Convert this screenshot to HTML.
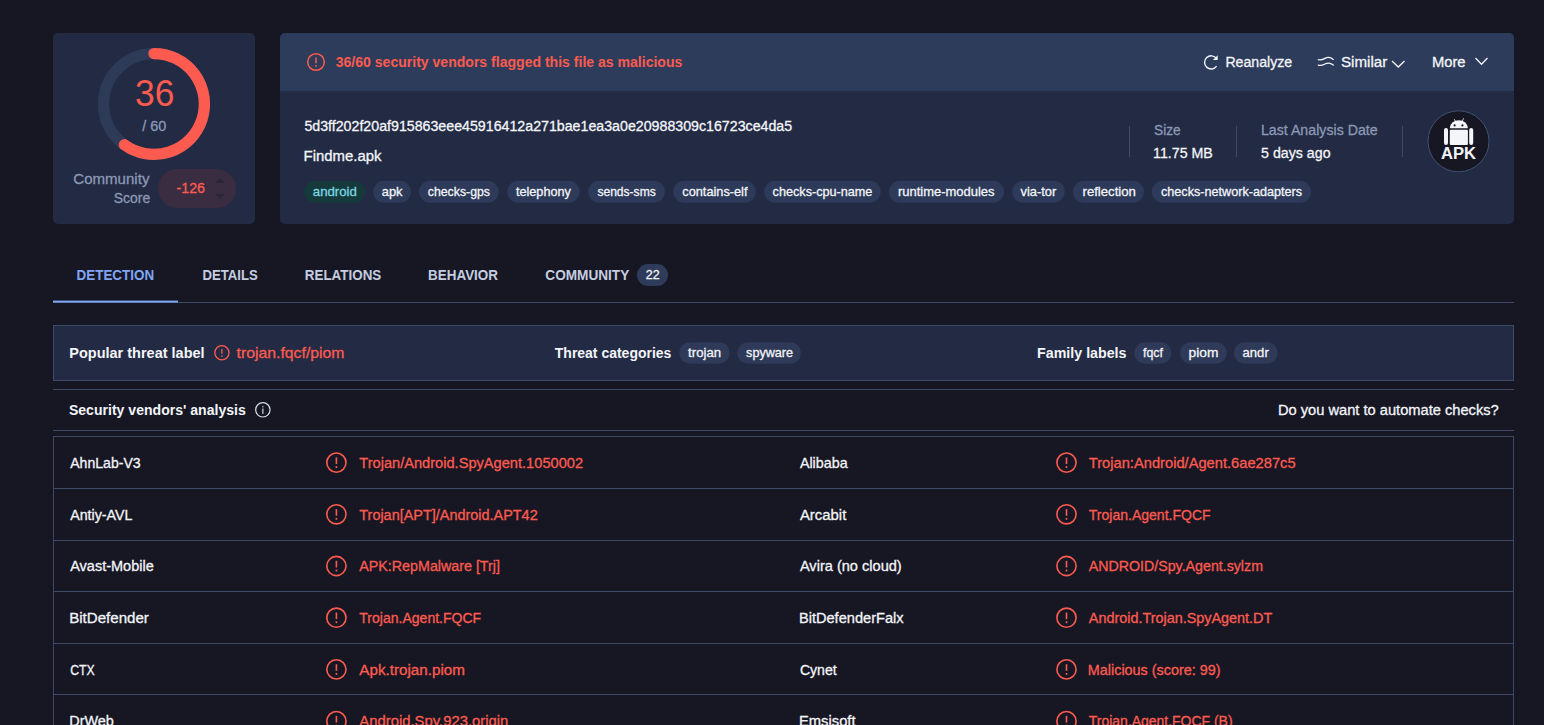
<!DOCTYPE html>
<html><head><meta charset="utf-8"><style>
html,body{margin:0;padding:0;}
body{width:1544px;height:725px;overflow:hidden;background:#171724;position:relative;font-family:"Liberation Sans",sans-serif;}
.abs{position:absolute;}
svg{position:absolute;left:0;top:0;}
svg text{font-family:"Liberation Sans",sans-serif;white-space:pre;stroke-width:0.3px;paint-order:stroke;}
</style></head><body>
<div class="abs" style="left:53px;top:33px;width:202px;height:191px;background:#232a43;border-radius:5px;"></div>
<div class="abs" style="left:280px;top:33px;width:1234px;height:191px;background:#232a43;border-radius:5px;overflow:hidden;">
  <div style="height:58px;background:#2e3c5b;"></div>
</div>
<div class="abs" style="left:53px;top:325px;width:1459px;height:54px;background:#232a43;border:1px solid #3c4967;"></div>
<div class="abs" style="left:53px;top:389px;width:1461px;height:1px;background:#3c4967;"></div>
<div class="abs" style="left:53px;top:430px;width:1461px;height:1px;background:#3c4967;"></div>
<div class="abs" style="left:53px;top:436px;width:1459px;height:400px;border:1px solid #3c4967;"></div>
<div class="abs" style="left:54px;top:488px;width:1459px;height:1px;background:#3c4967;"></div><div class="abs" style="left:54px;top:540px;width:1459px;height:1px;background:#3c4967;"></div><div class="abs" style="left:54px;top:591px;width:1459px;height:1px;background:#3c4967;"></div><div class="abs" style="left:54px;top:643px;width:1459px;height:1px;background:#3c4967;"></div><div class="abs" style="left:54px;top:694px;width:1459px;height:1px;background:#3c4967;"></div>
<svg width="1544" height="725" viewBox="0 0 1544 725">
<rect x="304.1" y="180.8" width="60.9" height="22" rx="11" fill="#163a3c"/><rect x="373.1" y="180.8" width="37.9" height="22" rx="11" fill="#2d3a5a"/><rect x="419" y="180.8" width="79.6" height="22" rx="11" fill="#2d3a5a"/><rect x="507.2" y="180.8" width="72.4" height="22" rx="11" fill="#2d3a5a"/><rect x="588.2" y="180.8" width="76.7" height="22" rx="11" fill="#2d3a5a"/><rect x="673.3" y="180.8" width="82.5" height="22" rx="11" fill="#2d3a5a"/><rect x="764.2" y="180.8" width="116.5" height="22" rx="11" fill="#2d3a5a"/><rect x="889" y="180.8" width="115.0" height="22" rx="11" fill="#2d3a5a"/><rect x="1012.2" y="180.8" width="52.5" height="22" rx="11" fill="#2d3a5a"/><rect x="1073" y="180.8" width="71.0" height="22" rx="11" fill="#2d3a5a"/><rect x="1151.9" y="180.8" width="159.1" height="22" rx="11" fill="#2d3a5a"/>
<circle cx="154" cy="104" r="50.4" fill="none" stroke="#2e3b58" stroke-width="11.3"/><path d="M 154 53.6 A 50.4 50.4 0 1 1 124.38 144.77" fill="none" stroke="#fd5b4f" stroke-width="11.3" stroke-linecap="round"/><rect x="158" y="169" width="78" height="39" rx="19.5" fill="#3a2d42"/><path d="M215 183 L220 178 L225 183 Z" fill="#2a2638"/><path d="M215 194 L220 199 L225 194 Z" fill="#2a2638"/><circle cx="316" cy="62" r="8.3" fill="none" stroke="#fd5b4f" stroke-width="1.5"/><rect x="315.25" y="57.52" width="1.5" height="5.73" fill="#fd5b4f"/><rect x="315.25" y="65.00" width="1.5" height="1.80" fill="#fd5b4f"/><path d="M 1216.5 58.5 A 6.6 6.6 0 1 0 1216.6 66.2" fill="none" stroke="#f3f5f9" stroke-width="1.4"/><path d="M 1212.9 59.9 L 1217.7 59.9 L 1217.7 55.2 Z" fill="#f3f5f9"/><path d="M1318.3 59.6 C 1321 60.4, 1322.8 59.6, 1325 58.4 C 1327.5 57, 1330.5 57.2, 1333.3 59.4" fill="none" stroke="#f3f5f9" stroke-width="1.3" stroke-linecap="round"/><path d="M1318.3 65.2 C 1321 66, 1322.8 65.2, 1325 64 C 1327.5 62.6, 1330.5 62.8, 1333.3 65" fill="none" stroke="#f3f5f9" stroke-width="1.3" stroke-linecap="round"/><path d="M1392 61 L1398.3 67 L1404.5 61" fill="none" stroke="#f3f5f9" stroke-width="1.3"/><path d="M1475.5 58 L1481.5 64.2 L1487.5 58" fill="none" stroke="#f3f5f9" stroke-width="1.3"/><rect x="1129.0" y="126" width="1" height="31" fill="#3c4967"/><rect x="1236.0" y="126" width="1" height="31" fill="#3c4967"/><rect x="1402.0" y="126" width="1" height="31" fill="#3c4967"/><circle cx="1458.5" cy="141.3" r="30.5" fill="#171724" stroke="#3e5272" stroke-width="1"/><path d="M1449.8 128.3 A 9 8 0 0 1 1467.9 128.3 Z" fill="#f3f5f9"/><line x1="1454.3" y1="119.2" x2="1455.4" y2="121.3" stroke="#f3f5f9" stroke-width="0.8"/><line x1="1463.6" y1="118.3" x2="1462.2" y2="121.3" stroke="#f3f5f9" stroke-width="0.8"/><circle cx="1454.6" cy="125.4" r="1.1" fill="#171724"/><circle cx="1462.4" cy="125.4" r="1.1" fill="#171724"/><rect x="1449.8" y="129.8" width="18.1" height="15.1" rx="1" fill="#f3f5f9"/><rect x="1444" y="128" width="4" height="17" rx="2" fill="#f3f5f9"/><rect x="1469.2" y="128" width="4" height="17" rx="2" fill="#f3f5f9"/><rect x="637" y="264" width="31" height="22" rx="11" fill="#2e3b5a"/><rect x="53" y="302" width="1461" height="1" fill="#3c4967"/><rect x="53" y="300.6" width="125" height="2" fill="#80a5f5"/><rect x="679.3" y="342.2" width="50.2" height="21.5" rx="10.75" fill="#2e3a58"/><rect x="737.3" y="342.2" width="63.5" height="21.5" rx="10.75" fill="#2e3a58"/><rect x="1134.4" y="342.2" width="37.1" height="21.5" rx="10.75" fill="#2e3a58"/><rect x="1180" y="342.2" width="46.7" height="21.5" rx="10.75" fill="#2e3a58"/><rect x="1234" y="342.2" width="43.6" height="21.5" rx="10.75" fill="#2e3a58"/><circle cx="221.9" cy="352.8" r="7.1" fill="none" stroke="#fd5b4f" stroke-width="1.3"/><rect x="221.25" y="348.97" width="1.3" height="4.90" fill="#fd5b4f"/><rect x="221.25" y="355.36" width="1.3" height="1.56" fill="#fd5b4f"/><circle cx="262.85" cy="409.8" r="7.2" fill="none" stroke="#d9dde5" stroke-width="1.2"/><rect x="262.2" y="408.5" width="1.3" height="5.4" fill="#c3c7d0"/><rect x="262.2" y="406" width="1.3" height="1.4" fill="#aeb2bc"/><circle cx="336.4" cy="462.6" r="9.6" fill="none" stroke="#fd5b4f" stroke-width="1.6"/><rect x="335.60" y="457.42" width="1.6" height="6.62" fill="#fd5b4f"/><rect x="335.60" y="466.15" width="1.6" height="1.92" fill="#fd5b4f"/><circle cx="1066.5" cy="462.6" r="9.6" fill="none" stroke="#fd5b4f" stroke-width="1.6"/><rect x="1065.70" y="457.42" width="1.6" height="6.62" fill="#fd5b4f"/><rect x="1065.70" y="466.15" width="1.6" height="1.92" fill="#fd5b4f"/><circle cx="336.4" cy="514.3000000000001" r="9.6" fill="none" stroke="#fd5b4f" stroke-width="1.6"/><rect x="335.60" y="509.12" width="1.6" height="6.62" fill="#fd5b4f"/><rect x="335.60" y="517.85" width="1.6" height="1.92" fill="#fd5b4f"/><circle cx="1066.5" cy="514.3000000000001" r="9.6" fill="none" stroke="#fd5b4f" stroke-width="1.6"/><rect x="1065.70" y="509.12" width="1.6" height="6.62" fill="#fd5b4f"/><rect x="1065.70" y="517.85" width="1.6" height="1.92" fill="#fd5b4f"/><circle cx="336.4" cy="566.0" r="9.6" fill="none" stroke="#fd5b4f" stroke-width="1.6"/><rect x="335.60" y="560.82" width="1.6" height="6.62" fill="#fd5b4f"/><rect x="335.60" y="569.55" width="1.6" height="1.92" fill="#fd5b4f"/><circle cx="1066.5" cy="566.0" r="9.6" fill="none" stroke="#fd5b4f" stroke-width="1.6"/><rect x="1065.70" y="560.82" width="1.6" height="6.62" fill="#fd5b4f"/><rect x="1065.70" y="569.55" width="1.6" height="1.92" fill="#fd5b4f"/><circle cx="336.4" cy="617.7" r="9.6" fill="none" stroke="#fd5b4f" stroke-width="1.6"/><rect x="335.60" y="612.52" width="1.6" height="6.62" fill="#fd5b4f"/><rect x="335.60" y="621.25" width="1.6" height="1.92" fill="#fd5b4f"/><circle cx="1066.5" cy="617.7" r="9.6" fill="none" stroke="#fd5b4f" stroke-width="1.6"/><rect x="1065.70" y="612.52" width="1.6" height="6.62" fill="#fd5b4f"/><rect x="1065.70" y="621.25" width="1.6" height="1.92" fill="#fd5b4f"/><circle cx="336.4" cy="669.4000000000001" r="9.6" fill="none" stroke="#fd5b4f" stroke-width="1.6"/><rect x="335.60" y="664.22" width="1.6" height="6.62" fill="#fd5b4f"/><rect x="335.60" y="672.95" width="1.6" height="1.92" fill="#fd5b4f"/><circle cx="1066.5" cy="669.4000000000001" r="9.6" fill="none" stroke="#fd5b4f" stroke-width="1.6"/><rect x="1065.70" y="664.22" width="1.6" height="6.62" fill="#fd5b4f"/><rect x="1065.70" y="672.95" width="1.6" height="1.92" fill="#fd5b4f"/><circle cx="336.4" cy="721.1" r="9.6" fill="none" stroke="#fd5b4f" stroke-width="1.6"/><rect x="335.60" y="715.92" width="1.6" height="6.62" fill="#fd5b4f"/><rect x="335.60" y="724.65" width="1.6" height="1.92" fill="#fd5b4f"/><circle cx="1066.5" cy="721.1" r="9.6" fill="none" stroke="#fd5b4f" stroke-width="1.6"/><rect x="1065.70" y="715.92" width="1.6" height="6.62" fill="#fd5b4f"/><rect x="1065.70" y="724.65" width="1.6" height="1.92" fill="#fd5b4f"/>
<text transform="matrix(0.9687 0 0 1 135.03 106.30)" font-size="36.5" fill="#fd5b4f">36</text>
<text transform="matrix(0.9950 0 0 1 142.30 130.50)" font-size="14.5" fill="#8b99b6" stroke="#8b99b6">/ 60</text>
<text transform="matrix(0.9845 0 0 1 73.30 184.20)" font-size="15.3" fill="#8b99b6" stroke="#8b99b6">Community</text>
<text transform="matrix(0.9150 0 0 1 113.70 202.90)" font-size="15.3" fill="#8b99b6" stroke="#8b99b6">Score</text>
<text transform="matrix(0.9349 0 0 1 176.60 193.00)" font-size="15.2" fill="#fd5b4f" stroke="#fd5b4f">-126</text>
<text transform="matrix(0.9127 0 0 1 335.70 67.00)" font-size="15.4" font-weight="700" fill="#fd5b4f">36/60 security vendors flagged this file as malicious</text>
<text transform="matrix(0.9132 0 0 1 1225.39 66.70)" font-size="15.5" fill="#f3f5f9" stroke="#f3f5f9">Reanalyze</text>
<text transform="matrix(0.9788 0 0 1 1340.90 66.70)" font-size="15.5" fill="#f3f5f9" stroke="#f3f5f9">Similar</text>
<text transform="matrix(0.9527 0 0 1 1431.95 66.70)" font-size="15.5" fill="#f3f5f9" stroke="#f3f5f9">More</text>
<text transform="matrix(0.9801 0 0 1 304.40 130.70)" font-size="14.5" fill="#f3f5f9" stroke="#f3f5f9">5d3ff202f20af915863eee45916412a271bae1ea3a0e20988309c16723ce4da5</text>
<text transform="matrix(0.9803 0 0 1 303.62 161.30)" font-size="15.2" fill="#f3f5f9" stroke="#f3f5f9">Findme.apk</text>
<text transform="matrix(0.8838 0 0 1 1154.00 135.10)" font-size="15.5" fill="#8b99b6" stroke="#8b99b6">Size</text>
<text transform="matrix(0.9177 0 0 1 1153.08 158.00)" font-size="15.5" fill="#f3f5f9" stroke="#f3f5f9">11.75 MB</text>
<text transform="matrix(0.9168 0 0 1 1260.88 135.10)" font-size="15.5" fill="#8b99b6" stroke="#8b99b6">Last Analysis Date</text>
<text transform="matrix(0.9160 0 0 1 1261.10 158.00)" font-size="15.5" fill="#f3f5f9" stroke="#f3f5f9">5 days ago</text>
<text transform="matrix(0.9940 0 0 1 312.80 196.00)" font-size="13.3" fill="#7ad8e2" stroke="#7ad8e2">android</text>
<text transform="matrix(0.9637 0 0 1 381.80 196.00)" font-size="13.3" fill="#f3f5f9" stroke="#f3f5f9">apk</text>
<text transform="matrix(0.9245 0 0 1 427.80 196.00)" font-size="13.3" fill="#f3f5f9" stroke="#f3f5f9">checks-gps</text>
<text transform="matrix(0.9549 0 0 1 515.90 196.00)" font-size="13.3" fill="#f3f5f9" stroke="#f3f5f9">telephony</text>
<text transform="matrix(0.9082 0 0 1 597.40 196.00)" font-size="13.3" fill="#f3f5f9" stroke="#f3f5f9">sends-sms</text>
<text transform="matrix(0.9590 0 0 1 682.30 196.00)" font-size="13.3" fill="#f3f5f9" stroke="#f3f5f9">contains-elf</text>
<text transform="matrix(0.9517 0 0 1 772.60 196.00)" font-size="13.3" fill="#f3f5f9" stroke="#f3f5f9">checks-cpu-name</text>
<text transform="matrix(0.9771 0 0 1 897.90 196.00)" font-size="13.3" fill="#f3f5f9" stroke="#f3f5f9">runtime-modules</text>
<text transform="matrix(0.9676 0 0 1 1020.50 196.00)" font-size="13.3" fill="#f3f5f9" stroke="#f3f5f9">via-tor</text>
<text transform="matrix(0.9896 0 0 1 1082.50 196.00)" font-size="13.3" fill="#f3f5f9" stroke="#f3f5f9">reflection</text>
<text transform="matrix(0.9503 0 0 1 1161.00 196.00)" font-size="13.3" fill="#f3f5f9" stroke="#f3f5f9">checks-network-adapters</text>
<text transform="matrix(0.8794 0 0 1 76.52 280.00)" font-size="15.3" font-weight="700" fill="#80a5f5">DETECTION</text>
<text transform="matrix(0.8606 0 0 1 202.44 280.00)" font-size="15.3" font-weight="700" fill="#c5cde0">DETAILS</text>
<text transform="matrix(0.8763 0 0 1 304.82 280.00)" font-size="15.3" font-weight="700" fill="#c5cde0">RELATIONS</text>
<text transform="matrix(0.8783 0 0 1 428.12 280.00)" font-size="15.3" font-weight="700" fill="#c5cde0">BEHAVIOR</text>
<text transform="matrix(0.8904 0 0 1 545.30 280.00)" font-size="15.3" font-weight="700" fill="#c5cde0">COMMUNITY</text>
<text transform="matrix(0.9628 0 0 1 645.80 279.00)" font-size="13" fill="#f3f5f9" stroke="#f3f5f9">22</text>
<text transform="matrix(0.9366 0 0 1 69.26 358.10)" font-size="15.5" font-weight="700" fill="#f3f5f9">Popular threat label</text>
<text transform="matrix(1.0390 0 0 1 236.60 357.80)" font-size="15.2" fill="#fd5b4f" stroke="#fd5b4f">trojan.fqcf/piom</text>
<text transform="matrix(0.9028 0 0 1 554.80 358.10)" font-size="15.5" font-weight="700" fill="#f3f5f9">Threat categories</text>
<text transform="matrix(0.9919 0 0 1 688.10 357.20)" font-size="13.3" fill="#f3f5f9" stroke="#f3f5f9">trojan</text>
<text transform="matrix(0.9487 0 0 1 746.10 357.20)" font-size="13.3" fill="#f3f5f9" stroke="#f3f5f9">spyware</text>
<text transform="matrix(0.9192 0 0 1 1037.08 358.10)" font-size="15.5" font-weight="700" fill="#f3f5f9">Family labels</text>
<text transform="matrix(0.9078 0 0 1 68.90 415.40)" font-size="15.5" font-weight="700" fill="#f3f5f9">Security vendors&#39; analysis</text>
<text transform="matrix(0.9651 0 0 1 1277.93 414.80)" font-size="15.2" fill="#f3f5f9" stroke="#f3f5f9">Do you want to automate checks?</text>
<text transform="matrix(0.9511 0 0 1 70.20 468.00)" font-size="14.8" fill="#f3f5f9" stroke="#f3f5f9">AhnLab-V3</text>
<text transform="matrix(0.9882 0 0 1 359.30 468.00)" font-size="14.8" fill="#fd5b4f" stroke="#fd5b4f">Trojan/Android.SpyAgent.1050002</text>
<text transform="matrix(0.9674 0 0 1 799.90 468.00)" font-size="14.8" fill="#f3f5f9" stroke="#f3f5f9">Alibaba</text>
<text transform="matrix(0.9929 0 0 1 1088.80 468.00)" font-size="14.8" fill="#fd5b4f" stroke="#fd5b4f">Trojan:Android/Agent.6ae287c5</text>
<text transform="matrix(0.9618 0 0 1 70.20 519.65)" font-size="14.8" fill="#f3f5f9" stroke="#f3f5f9">Antiy-AVL</text>
<text transform="matrix(0.9763 0 0 1 359.30 519.65)" font-size="14.8" fill="#fd5b4f" stroke="#fd5b4f">Trojan[APT]/Android.APT42</text>
<text transform="matrix(1.0078 0 0 1 799.90 519.65)" font-size="14.8" fill="#f3f5f9" stroke="#f3f5f9">Arcabit</text>
<text transform="matrix(0.9485 0 0 1 1088.80 519.65)" font-size="14.8" fill="#fd5b4f" stroke="#fd5b4f">Trojan.Agent.FQCF</text>
<text transform="matrix(0.9809 0 0 1 70.20 571.30)" font-size="14.8" fill="#f3f5f9" stroke="#f3f5f9">Avast-Mobile</text>
<text transform="matrix(0.9650 0 0 1 359.30 571.30)" font-size="14.8" fill="#fd5b4f" stroke="#fd5b4f">APK:RepMalware [Trj]</text>
<text transform="matrix(0.9852 0 0 1 799.90 571.30)" font-size="14.8" fill="#f3f5f9" stroke="#f3f5f9">Avira (no cloud)</text>
<text transform="matrix(0.9602 0 0 1 1088.80 571.30)" font-size="14.8" fill="#fd5b4f" stroke="#fd5b4f">ANDROID/Spy.Agent.sylzm</text>
<text transform="matrix(1.0206 0 0 1 69.18 622.95)" font-size="14.8" fill="#f3f5f9" stroke="#f3f5f9">BitDefender</text>
<text transform="matrix(0.9493 0 0 1 359.30 622.95)" font-size="14.8" fill="#fd5b4f" stroke="#fd5b4f">Trojan.Agent.FQCF</text>
<text transform="matrix(0.9878 0 0 1 798.91 622.95)" font-size="14.8" fill="#f3f5f9" stroke="#f3f5f9">BitDefenderFalx</text>
<text transform="matrix(0.9731 0 0 1 1088.80 622.95)" font-size="14.8" fill="#fd5b4f" stroke="#fd5b4f">Android.Trojan.SpyAgent.DT</text>
<text transform="matrix(0.8276 0 0 1 70.20 674.60)" font-size="14.8" fill="#f3f5f9" stroke="#f3f5f9">CTX</text>
<text transform="matrix(1.0275 0 0 1 359.30 674.60)" font-size="14.8" fill="#fd5b4f" stroke="#fd5b4f">Apk.trojan.piom</text>
<text transform="matrix(0.9522 0 0 1 799.90 674.60)" font-size="14.8" fill="#f3f5f9" stroke="#f3f5f9">Cynet</text>
<text transform="matrix(0.9729 0 0 1 1087.83 674.60)" font-size="14.8" fill="#fd5b4f" stroke="#fd5b4f">Malicious (score: 99)</text>
<text transform="matrix(0.9766 0 0 1 69.22 726.25)" font-size="14.8" fill="#f3f5f9" stroke="#f3f5f9">DrWeb</text>
<text transform="matrix(1.0028 0 0 1 359.30 726.25)" font-size="14.8" fill="#fd5b4f" stroke="#fd5b4f">Android.Spy.923.origin</text>
<text transform="matrix(0.9996 0 0 1 798.90 726.25)" font-size="14.8" fill="#f3f5f9" stroke="#f3f5f9">Emsisoft</text>
<text transform="matrix(0.9445 0 0 1 1088.80 726.25)" font-size="14.8" fill="#fd5b4f" stroke="#fd5b4f">Trojan.Agent.FQCF (B)</text>
<text transform="matrix(0.9293 0 0 1 1143.00 357.20)" font-size="13.3" fill="#f3f5f9" stroke="#f3f5f9">fqcf</text>
<text transform="matrix(1.0367 0 0 1 1188.60 357.20)" font-size="13.3" fill="#f3f5f9" stroke="#f3f5f9">piom</text>
<text transform="matrix(0.9821 0 0 1 1242.60 357.20)" font-size="13.3" fill="#f3f5f9" stroke="#f3f5f9">andr</text>
<text x="1441" y="158.6" font-size="16.5" font-weight="700" fill="#f3f5f9" textLength="35" lengthAdjust="spacingAndGlyphs">APK</text>
</svg>
</body></html>
